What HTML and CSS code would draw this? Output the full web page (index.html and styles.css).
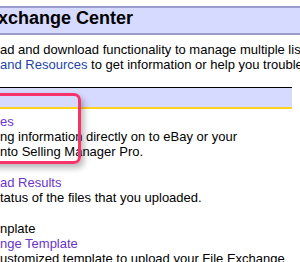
FILE: index.html
```html
<!DOCTYPE html>
<html lang="en">
<head>
    <meta charset="UTF-8">
    <meta name="viewport" content="width=device-width, initial-scale=1.0">
    <title>File Exchange Center</title>
    <link rel="stylesheet" href="styles.css">
</head>
<body>
    <div class="page">
        <div class="title-bar">
            <h1>xchange Center</h1>
        </div>

        <p class="intro">
            ad and download functionality to manage multiple listings<br>
            <a href="#" class="link">and Resources</a> to get information or help you troubleshoot
        </p>

        <div class="section-head"></div>

        <div class="item">
            <a href="#" class="visited">es</a><br>
            ng information directly on to eBay or your<br>
            nto Selling Manager Pro.
        </div>

        <div class="item">
            <a href="#" class="visited">ad Results</a><br>
            tatus of the files that you uploaded.
        </div>

        <div class="item">
            nplate<br>
            <a href="#" class="visited">nge Template</a><br>
            ustomized template to upload your File Exchange
        </div>

        <!-- highlight drawn over the page -->
        <div class="highlight"></div>
    </div>
</body>
</html>
```

FILE: styles.css
```css
* {
    margin: 0;
    padding: 0;
    box-sizing: border-box;
}

body {
    font-family: "Liberation Sans", Arial, sans-serif;
    font-size: 13px;
    line-height: 15px;
    color: #000;
    background-color: #fff;
    overflow: hidden;
}

.page {
    position: relative;
    width: 300px;
    height: 262px;
    overflow: hidden;
    padding-top: 6px;
    white-space: nowrap;
}

.title-bar {
    background-color: #d6daff;
    border-top: 2px solid #9c9ccc;
    border-bottom: 2px solid #9c9ccc;
    padding-bottom: 4px;
}

h1 {
    font-size: 18px;
    line-height: 21px;
    font-weight: bold;
    margin-left: -2px;
}

.intro {
    margin-top: 7px;
}

a {
    text-decoration: none;
}

.link {
    color: #2346a8;
}

.visited {
    color: #6a35c9;
}

.section-head {
    margin-top: 15px;
    margin-right: 8px;
    height: 22px;
    background-color: #d6daff;
    border-top: 1px solid #000;
    border-bottom: 2px solid #ffd21f;
}

.item {
    margin-top: 16px;
}

.section-head + .item {
    margin-top: 5px;
}

.item:last-of-type {
    margin-top: 15px;
}

.highlight {
    position: absolute;
    left: -12px;
    top: 93px;
    width: 93px;
    height: 71px;
    border: 3px solid #f8336c;
    border-radius: 7px;
    box-shadow: 3px 4px 6px rgba(0, 0, 0, 0.28);
}
```
